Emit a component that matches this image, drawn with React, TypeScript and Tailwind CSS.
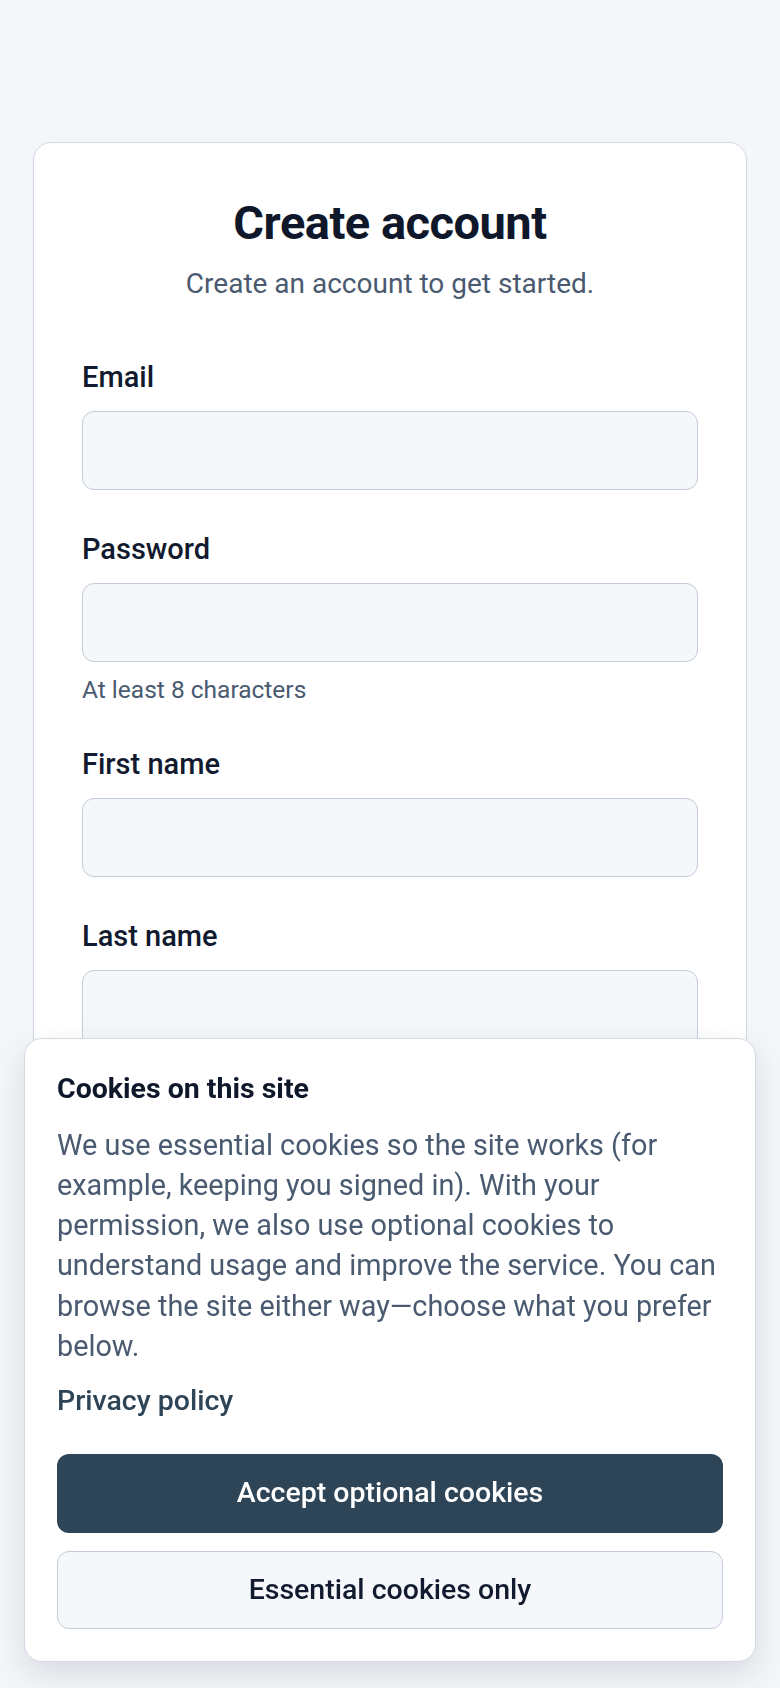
const body = { fontFamily: 'Roboto, "Noto Sans", sans-serif' };
const head = { fontFamily: 'Roboto, "Liberation Sans", sans-serif' };

function Field({ label, type = "text", hint, first }: { label: string; type?: string; hint?: string; first?: boolean }) {
  return (
    <div className={first ? "mt-[53px]" : "mt-[39px]"}>
      <label className="block text-[29px] font-medium leading-[40px] text-[#111a2e]">{label}</label>
      <input
        type={type}
        className="mt-[14px] block h-[79px] w-full rounded-[12px] border-[1.5px] border-[#c3ccd9] bg-[#f5f7fa] px-5 text-[27px] outline-none"
      />
      {hint && <p className="mt-[13px] text-[24.5px] leading-[30px] text-[#4a5a70]">{hint}</p>}
    </div>
  );
}

export default function App() {
  return (
    <div className="min-h-screen bg-[#f5f6fa] px-[33px] pt-[142px]" style={body}>
      <div className="rounded-[18px] border-[1.5px] border-[#cfd7e2] bg-white px-12 pb-12 pt-[53px]">
        <h1 className="text-center text-[47px] font-bold leading-[54px] tracking-[-0.5px] text-[#0f172a]" style={head}>
          Create account
        </h1>
        <p className="mt-[14px] text-center text-[28px] leading-[40px] text-[#4a5a70]">Create an account to get started.</p>
        <Field label="Email" type="email" first />
        <Field label="Password" type="password" hint="At least 8 characters" />
        <Field label="First name" />
        <Field label="Last name" />
        <button className="mt-[48px] h-[79px] w-full rounded-[12px] bg-[#2e4457] text-[28.5px] font-medium text-white">
          Create account
        </button>
      </div>

      {/* cookie banner sits over the bottom of the form */}
      <div className="fixed inset-x-6 bottom-[26px] rounded-[18px] border-[1.5px] border-[#d1d9e3] bg-white px-[31px] pb-8 pt-8 shadow-[0_12px_32px_rgba(15,23,42,0.12)]">
        <h2 className="pl-px text-[28.5px] font-bold leading-[36px] text-[#0f172a]" style={head}>
          Cookies on this site
        </h2>
        <p className="mt-[18px] pl-px text-[28.8px] leading-[40.25px] text-[#4a5a70]">
          We use essential cookies so the site works (for example, keeping you signed in). With your permission, we also
          use optional cookies to understand usage and improve the service. You can browse the site either way—choose
          what you prefer below.
        </p>
        <a href="#" className="mt-[15px] block pl-px text-[28.5px] font-medium leading-[40px] text-[#2e4457]">
          Privacy policy
        </a>
        <div className="px-px">
          <button className="mt-[33px] block h-[79px] w-full rounded-[12px] bg-[#2e4457] text-[28.5px] font-medium text-white">
            Accept optional cookies
          </button>
          <button className="mt-[18px] block h-[78px] w-full rounded-[12px] border-[1.5px] border-[#c3ccd9] bg-[#f5f7fa] text-[28.5px] font-medium text-[#111a2e]">
            Essential cookies only
          </button>
        </div>
      </div>
    </div>
  );
}
